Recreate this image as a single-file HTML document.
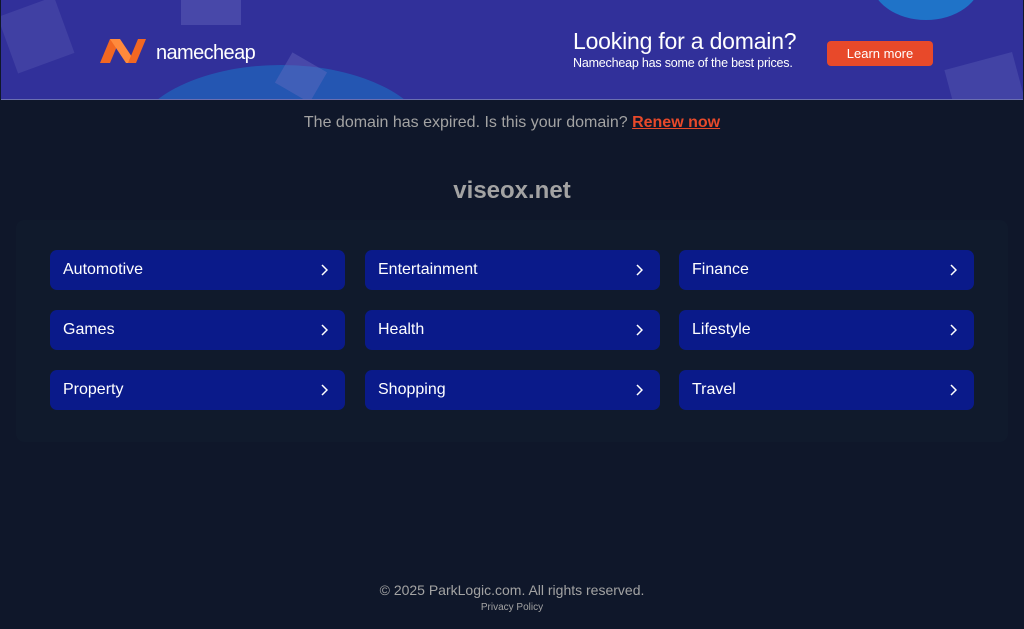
<!DOCTYPE html>
<html><head><style>
*{margin:0;padding:0;box-sizing:border-box}
body{width:1024px;height:629px;background:#0f172a;font-family:"Liberation Sans",sans-serif;position:relative;overflow:hidden}
.banner{position:absolute;left:1px;top:0;width:1022px;height:100px;background:#31309a;overflow:hidden;border-bottom:1px solid #6b6fb0}
.ban{position:absolute}
.btn{position:absolute;left:826px;top:41px;width:106px;height:25px;background:#e8492a;border-radius:4px;color:#fff;font-size:13px;text-align:center;line-height:25px}
.cat{position:absolute;width:295px;height:40px;background:#0a1a8a;border-radius:7px;color:#fff;font-size:16px;line-height:40px;padding-left:13px}
.cat svg{position:absolute;right:17px;top:14px}
</style></head><body>
<div class="banner">
<div class="ban" style="left:130px;top:65px;width:300px;height:160px;border-radius:50%;background:#2260b8;opacity:.8"></div>
<div class="ban" style="left:870px;top:-60px;width:110px;height:80px;border-radius:50%;background:#1f73c8"></div>
<div class="ban" style="left:5px;top:5px;width:60px;height:60px;background:#5f5fb5;opacity:.35;transform:rotate(-20deg)"></div>
<div class="ban" style="left:280px;top:60px;width:40px;height:35px;background:#6b6fc0;opacity:.4;transform:rotate(30deg)"></div>
<div class="ban" style="left:180px;top:0;width:60px;height:25px;background:#6b6fc0;opacity:.4"></div>
<div class="ban" style="left:950px;top:60px;width:70px;height:60px;background:#6b6fc0;opacity:.3;transform:rotate(-15deg)"></div>
<svg class="ban" style="left:97px;top:35px" width="52" height="30" viewBox="0 0 52 30"><path d="M2 28 L12 4 L22 4 L12 28Z" fill="#f26722"/><path d="M12 4 L22 4 L38 28 L28 28Z" fill="#ff8a3c"/><path d="M38 28 L48 4 L40 4 L30 28Z" fill="#f26722"/></svg>
<div class="ban" style="left:155px;top:42px;color:#fff;font-size:20px;letter-spacing:-0.6px;font-weight:300">namecheap</div>
<div class="ban" style="left:572px;top:28px;color:#fff;font-size:23px;letter-spacing:-0.2px">Looking for a domain?</div>
<div class="ban" style="left:572px;top:56px;color:#fff;font-size:12.5px;letter-spacing:-0.2px">Namecheap has some of the best prices.</div>
<div class="btn">Learn more</div>
</div>
<div style="position:absolute;top:114px;width:100%;text-align:center;color:#a3a3a3;font-size:16px">The domain has expired. Is this your domain? <a style="color:#e8492a;font-weight:bold;text-decoration:underline">Renew now</a></div>
<div style="position:absolute;top:177px;width:100%;text-align:center;color:#a3a3a3;font-size:24px;font-weight:bold">viseox.net</div>
<div style="position:absolute;left:16px;top:220px;width:992px;height:222px;background:#101a2c;border-radius:8px"></div>
<div class="cat" style="left:50px;top:250px">Automotive<svg width="8" height="12"><path d="M2 1l5 5-5 5" stroke="#fff" stroke-width="1.5" fill="none"/></svg></div>
<div class="cat" style="left:365px;top:250px">Entertainment<svg width="8" height="12"><path d="M2 1l5 5-5 5" stroke="#fff" stroke-width="1.5" fill="none"/></svg></div>
<div class="cat" style="left:679px;top:250px">Finance<svg width="8" height="12"><path d="M2 1l5 5-5 5" stroke="#fff" stroke-width="1.5" fill="none"/></svg></div>
<div class="cat" style="left:50px;top:310px">Games<svg width="8" height="12"><path d="M2 1l5 5-5 5" stroke="#fff" stroke-width="1.5" fill="none"/></svg></div>
<div class="cat" style="left:365px;top:310px">Health<svg width="8" height="12"><path d="M2 1l5 5-5 5" stroke="#fff" stroke-width="1.5" fill="none"/></svg></div>
<div class="cat" style="left:679px;top:310px">Lifestyle<svg width="8" height="12"><path d="M2 1l5 5-5 5" stroke="#fff" stroke-width="1.5" fill="none"/></svg></div>
<div class="cat" style="left:50px;top:370px">Property<svg width="8" height="12"><path d="M2 1l5 5-5 5" stroke="#fff" stroke-width="1.5" fill="none"/></svg></div>
<div class="cat" style="left:365px;top:370px">Shopping<svg width="8" height="12"><path d="M2 1l5 5-5 5" stroke="#fff" stroke-width="1.5" fill="none"/></svg></div>
<div class="cat" style="left:679px;top:370px">Travel<svg width="8" height="12"><path d="M2 1l5 5-5 5" stroke="#fff" stroke-width="1.5" fill="none"/></svg></div>
<div style="position:absolute;top:582px;width:100%;text-align:center;color:#a3a3a3;font-size:14px">© 2025 ParkLogic.com. All rights reserved.</div>
<div style="position:absolute;top:602px;width:100%;text-align:center;color:#a3a3a3;font-size:10px">Privacy Policy</div>
</body></html>
